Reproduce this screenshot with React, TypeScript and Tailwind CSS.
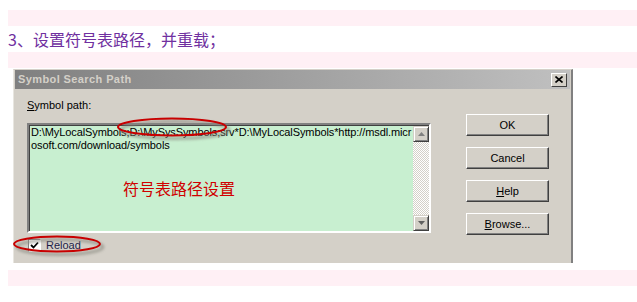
import React from "react";

const btn =
  "h-[22px] w-[83px] bg-[#d4d0c8] border border-t-white border-l-white border-r-[#404040] border-b-[#404040] shadow-[inset_-1px_-1px_0_#808080] flex items-center justify-center text-[11px] text-black";

function ScrollBtn({ up }: { up: boolean }) {
  return (
    <div className="w-[16px] h-[16px] bg-[#d4d0c8] border border-t-[#d4d0c8] border-l-[#d4d0c8] border-r-[#404040] border-b-[#404040] shadow-[inset_1px_1px_0_#fff,inset_-1px_-1px_0_#808080] flex items-center justify-center">
      <svg width="7" height="4" viewBox="0 0 7 4">
        {up ? <polygon points="3.5,0 7,4 0,4" fill="#808080" /> : <polygon points="0,0 7,0 3.5,4" fill="#606060" />}
      </svg>
    </div>
  );
}

export default function App() {
  return (
    <div className="relative w-[637px] h-[302px] bg-white pt-[10px] pl-[8px] overflow-hidden" style={{ fontFamily: '"Liberation Sans", Arial, sans-serif' }}>
      <div className="h-[16px] bg-[#fff0f5]" />
      <div
        className="h-[26px] flex items-center text-[16px] text-[#7030a0]"
        style={{ fontFamily: '"Noto Sans CJK SC", "Liberation Sans", sans-serif' }}
      >
        3、设置符号表路径，并重载；
      </div>
      <div className="h-[16px] bg-[#fff0f5]" />

      {/* dialog */}
      <div className="ml-[5px] mt-[1px] w-[560px] h-[194px] bg-[#d4d0c8] border-t border-l border-t-[#d4d0c8] border-l-[#e8e6e0] border-r-2 border-r-[#808080] flex flex-col">
        <div className="mx-[1px] h-[19px] bg-gradient-to-r from-[#808080] to-[#c0c0c0] flex items-center justify-between pl-[3px] pr-[3px]">
          <span className="text-[11px] font-bold text-[#d4d0c8] tracking-[0.4px]">Symbol Search Path</span>
          <div className="w-[16px] h-[14px] bg-[#d4d0c8] border border-t-white border-l-white border-r-[#404040] border-b-[#404040] flex items-center justify-center">
            <svg width="8" height="7" viewBox="0 0 8 7">
              <path d="M0.5 0.5 L7.5 6.5 M7.5 0.5 L0.5 6.5" stroke="#000" strokeWidth="1.6" />
            </svg>
          </div>
        </div>

        <div className="flex flex-1">
          <div className="pl-[13px] pt-[10px] flex flex-col">
            <div className="h-[13px] leading-[13px] text-[11px] text-black">
              <span className="underline">S</span>ymbol path:
            </div>
            <div className="mt-[11px] w-[404px] h-[110px] border-2 border-t-[#808080] border-l-[#808080] border-r-white border-b-white flex">
              <div className="flex-1 bg-[#c8efd0] pt-0 pl-[1px] text-[11px] leading-[13px] text-black border-t border-l border-t-[#404040] border-l-[#404040]">
                <div className="whitespace-nowrap tracking-[-0.1px]">D:\MyLocalSymbols;D:\MySysSymbols;srv*D:\MyLocalSymbols*http://msdl.micr</div>
                <div className="whitespace-nowrap tracking-[-0.1px]">osoft.com/download/symbols</div>
                <div
                  className="mt-[25px] ml-[92px] text-[16px] leading-[22px] text-[#d00000]"
                  style={{ fontFamily: '"Noto Sans CJK SC", sans-serif' }}
                >
                  符号表路径设置
                </div>
              </div>
              <div className="w-[16px] flex flex-col border-t border-t-[#404040] bg-[repeating-conic-gradient(#d4d0c8_0_25%,#ffffff_0_50%)] bg-[length:2px_2px]">
                <ScrollBtn up />
                <div className="flex-1" />
                <ScrollBtn up={false} />
              </div>
            </div>
            <div className="mt-[6px] flex items-center h-[13px]">
              <div className="ml-[1px] w-[13px] h-[13px] bg-white border border-t-[#808080] border-l-[#808080] border-r-white border-b-white flex items-center justify-center">
                <svg width="9" height="9" viewBox="0 0 9 9">
                  <path d="M1 4 L3.5 6.5 L8 1.5" stroke="#000" strokeWidth="1.8" fill="none" />
                </svg>
              </div>
              <span className="ml-[5px] text-[11px] text-[#1c1c48]">Reload</span>
            </div>
          </div>

          <div className="ml-[35px] pt-[25px] flex flex-col gap-[11px]">
            <div className={btn}>OK</div>
            <div className={btn}>Cancel</div>
            <div className={btn}>
              <span><span className="underline">H</span>elp</span>
            </div>
            <div className={btn}>
              <span><span className="underline">B</span>rowse...</span>
            </div>
          </div>
        </div>
      </div>

      <div className="mt-[7px] h-[16px] bg-[#fff0f5]" />

      {/* annotation ellipses */}
      <svg className="absolute left-[110px] top-[112px]" width="130" height="32" viewBox="0 0 130 32">
        <defs>
          <filter id="sh1" x="-20%" y="-50%" width="140%" height="200%">
            <feGaussianBlur stdDeviation="1.5" />
          </filter>
        </defs>
        <ellipse cx="65" cy="18" rx="54" ry="8.5" fill="none" stroke="#8a8a80" strokeWidth="2.5" filter="url(#sh1)" opacity="0.8" />
        <ellipse cx="62" cy="15" rx="54" ry="8.5" fill="none" stroke="#c80000" strokeWidth="2" />
      </svg>
      <svg className="absolute left-[10px] top-[233px]" width="100" height="26" viewBox="0 0 100 26">
        <defs>
          <filter id="sh2" x="-20%" y="-50%" width="140%" height="200%">
            <feGaussianBlur stdDeviation="1.5" />
          </filter>
        </defs>
        <ellipse cx="50" cy="14" rx="43" ry="7.5" fill="none" stroke="#8a8a80" strokeWidth="2.5" filter="url(#sh2)" opacity="0.8" />
        <ellipse cx="47" cy="11" rx="43" ry="7.5" fill="none" stroke="#c80000" strokeWidth="2" />
      </svg>
    </div>
  );
}
